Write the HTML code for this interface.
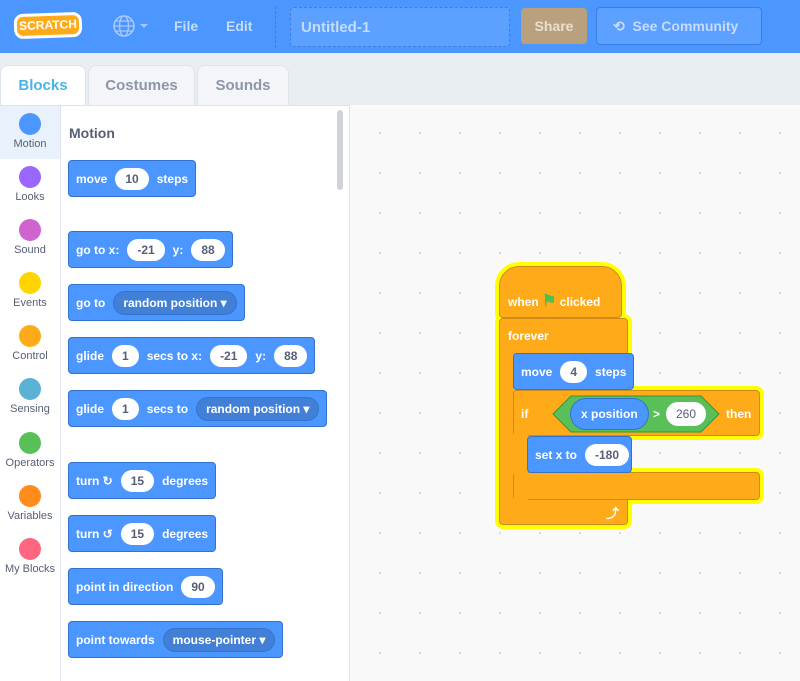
<!DOCTYPE html>
<html><head><meta charset="utf-8"><style>
*{box-sizing:border-box;margin:0;padding:0}
body{width:800px;height:681px;overflow:hidden;font-family:"Liberation Sans",sans-serif;background:#e9eef2;position:relative}
.a{position:absolute}
.hdr{left:0;top:0;width:800px;height:53px;background:#4c97ff}
.ht{color:#c5dbff;font-weight:bold;font-size:14px}
.tab{top:65px;height:40px;background:#f3f5f8;border:1px solid #dde3ea;border-bottom:none;border-radius:8px 8px 0 0;color:#8e97a8;font-size:15px;font-weight:bold;text-align:center;line-height:40px}
.cat{left:0;width:60px;text-align:center;font-size:11px;color:#575e75}
.cat i{display:block;width:22px;height:22px;border-radius:50%;margin:0 auto 3px}
.b{background:#4c97ff;border:1px solid #3373cc;border-radius:4px;color:#fff;font-size:12px;font-weight:bold;height:37px;display:flex;align-items:center;padding:0 7px;gap:8px;white-space:nowrap}
.n{background:#fff;color:#575e75;border-radius:12px;height:22px;line-height:22px;padding:0 10px;font-size:12px}
.d{background:#4280d7;border:1px solid #3373cc;border-radius:12px;height:24px;line-height:22px;padding:0 9px;font-size:12px}
.o{background:#ffab19;}
.y{background:#ff0;border-radius:8px}
</style></head><body>
<div class="a hdr"></div>
<div class="a" style="left:14px;top:13px;width:68px;height:25px;background:#ffab19;border:3px solid #fff;border-radius:9px;color:#fff;font-size:12px;font-weight:bold;text-align:center;line-height:19px;transform:rotate(-2deg)">SCRATCH</div>
<svg class="a" style="left:112px;top:14px" width="38" height="24"><circle cx="12" cy="12" r="10" fill="none" stroke="#a9c8ff" stroke-width="1.6"/><ellipse cx="12" cy="12" rx="4.5" ry="10" fill="none" stroke="#a9c8ff" stroke-width="1.3"/><path d="M2 12h20M4 7h16M4 17h16" stroke="#a9c8ff" stroke-width="1.3"/><path d="M28 10l4 4 4-4z" fill="#a9c8ff"/></svg>
<div class="a ht" style="left:174px;top:18px">File</div>
<div class="a ht" style="left:226px;top:18px">Edit</div>
<div class="a" style="left:275px;top:6px;height:42px;border-left:1px dashed #3a7fe0"></div>
<div class="a" style="left:290px;top:7px;width:220px;height:40px;background:#5ca1ff;border:1px dashed #3a7fe0;border-radius:4px;color:#c5dbff;font-size:15px;font-weight:bold;padding:11px 10px">Untitled-1</div>
<div class="a" style="left:521px;top:8px;width:66px;height:36px;background:#b9a17e;border-radius:4px;color:#e8dfcf;font-size:14px;font-weight:bold;text-align:center;line-height:36px">Share</div>
<div class="a" style="left:596px;top:7px;width:166px;height:38px;background:#5ca1ff;border:1px solid #3a7fe0;border-radius:4px;color:#c5dbff;font-size:14px;font-weight:bold;line-height:36px;padding-left:16px">⟲&nbsp; See Community</div>

<div class="a tab" style="left:0;width:86px;background:#fff;color:#4cb3e6;height:41px">Blocks</div>
<div class="a tab" style="left:88px;width:107px">Costumes</div>
<div class="a tab" style="left:197px;width:92px">Sounds</div>

<div class="a" style="left:0;top:105px;width:350px;height:576px;background:#fff;border-top:1px solid #dde3ea"></div>
<div class="a" style="left:0;top:106px;width:60px;height:53px;background:#e9f1fc"></div>
<div class="a" style="left:60px;top:106px;width:1px;height:575px;background:#dde3ea"></div>
<div class="a" style="left:349px;top:105px;width:451px;height:576px;background:#f9f9f9;border-left:1px solid #dde3ea;background-image:radial-gradient(#d8d8d8 1px,transparent 1.3px);background-size:40px 40px;background-position:10px 8px"></div>
<div class="a" style="left:337px;top:110px;width:6px;height:80px;background:#d0d4da;border-radius:3px"></div>

<div class="a cat" style="top:113px"><i style="background:#4c97ff"></i>Motion</div>
<div class="a cat" style="top:166px"><i style="background:#9966ff"></i>Looks</div>
<div class="a cat" style="top:219px"><i style="background:#cf63cf"></i>Sound</div>
<div class="a cat" style="top:272px"><i style="background:#ffd500"></i>Events</div>
<div class="a cat" style="top:325px"><i style="background:#ffab19"></i>Control</div>
<div class="a cat" style="top:378px"><i style="background:#5cb1d6"></i>Sensing</div>
<div class="a cat" style="top:432px"><i style="background:#59c059"></i>Operators</div>
<div class="a cat" style="top:485px"><i style="background:#ff8c1a"></i>Variables</div>
<div class="a cat" style="top:538px"><i style="background:#ff6680"></i>My Blocks</div>

<div class="a" style="left:69px;top:125px;font-size:14px;font-weight:bold;color:#575e75">Motion</div>
<div class="a b" style="left:68px;top:160px">move <span class="n">10</span> steps</div>
<div class="a b" style="left:68px;top:231px">go to x: <span class="n">-21</span> y: <span class="n">88</span></div>
<div class="a b" style="left:68px;top:284px">go to <span class="d">random position ▾</span></div>
<div class="a b" style="left:68px;top:337px">glide <span class="n">1</span> secs to x: <span class="n">-21</span> y: <span class="n">88</span></div>
<div class="a b" style="left:68px;top:390px">glide <span class="n">1</span> secs to <span class="d">random position ▾</span></div>
<div class="a b" style="left:68px;top:462px">turn ↻ <span class="n">15</span> degrees</div>
<div class="a b" style="left:68px;top:515px">turn ↺ <span class="n">15</span> degrees</div>
<div class="a b" style="left:68px;top:568px">point in direction <span class="n">90</span></div>
<div class="a b" style="left:68px;top:621px">point towards <span class="d">mouse-pointer ▾</span></div>

<!-- glow -->
<div class="a y" style="left:495px;top:262px;width:131px;height:60px;border-radius:24px 24px 8px 8px"></div>
<div class="a y" style="left:495px;top:314px;width:137px;height:215px"></div>
<div class="a y" style="left:509px;top:386px;width:255px;height:54px"></div>
<div class="a y" style="left:509px;top:468px;width:255px;height:36px"></div>
<!-- script -->
<div class="a o" style="left:499px;top:266px;width:123px;height:52px;border-radius:20px 20px 4px 4px;border:1px solid #cf8b17"></div>
<div class="a" style="left:508px;top:291px;color:#fff;font-size:12px;font-weight:bold">when <span style="color:#4cbf56;font-size:16px">⚑</span> clicked</div>
<div class="a o" style="left:499px;top:318px;width:129px;height:207px;border:1px solid #cf8b17;border-radius:4px"></div>
<div class="a" style="left:508px;top:329px;color:#fff;font-size:12px;font-weight:bold">forever</div>
<div class="a o" style="left:513px;top:390px;width:247px;height:46px;border:1px solid #cf8b17;border-radius:4px"></div>
<div class="a o" style="left:513px;top:472px;width:247px;height:28px;border:1px solid #cf8b17;border-radius:4px"></div>
<div class="a o" style="left:514px;top:420px;width:14px;height:80px"></div>
<div class="a" style="left:521px;top:407px;color:#fff;font-size:12px;font-weight:bold">if</div>
<div class="a" style="left:726px;top:407px;color:#fff;font-size:12px;font-weight:bold">then</div>
<svg class="a" style="left:552px;top:395px" width="168" height="38"><path d="M1 19L19 1H149L167 19L149 37H19Z" fill="#59c059" stroke="#389438"/></svg>
<div class="a d" style="left:570px;top:398px;height:32px;line-height:30px;border-radius:16px;background:#4c97ff;color:#fff;font-weight:bold;padding:0 10px">x position</div>
<div class="a" style="left:653px;top:407px;color:#fff;font-size:12px;font-weight:bold">&gt;</div>
<div class="a n" style="left:666px;top:402px;height:24px;line-height:24px">260</div>
<div class="a b" style="left:513px;top:353px;width:121px">move <span class="n">4</span> steps</div>
<div class="a b" style="left:527px;top:436px;width:105px">set x to <span class="n">-180</span></div>
<div class="a" style="left:606px;top:503px;color:#fff;font-size:13px;font-weight:bold">⤴</div>
</body></html>
